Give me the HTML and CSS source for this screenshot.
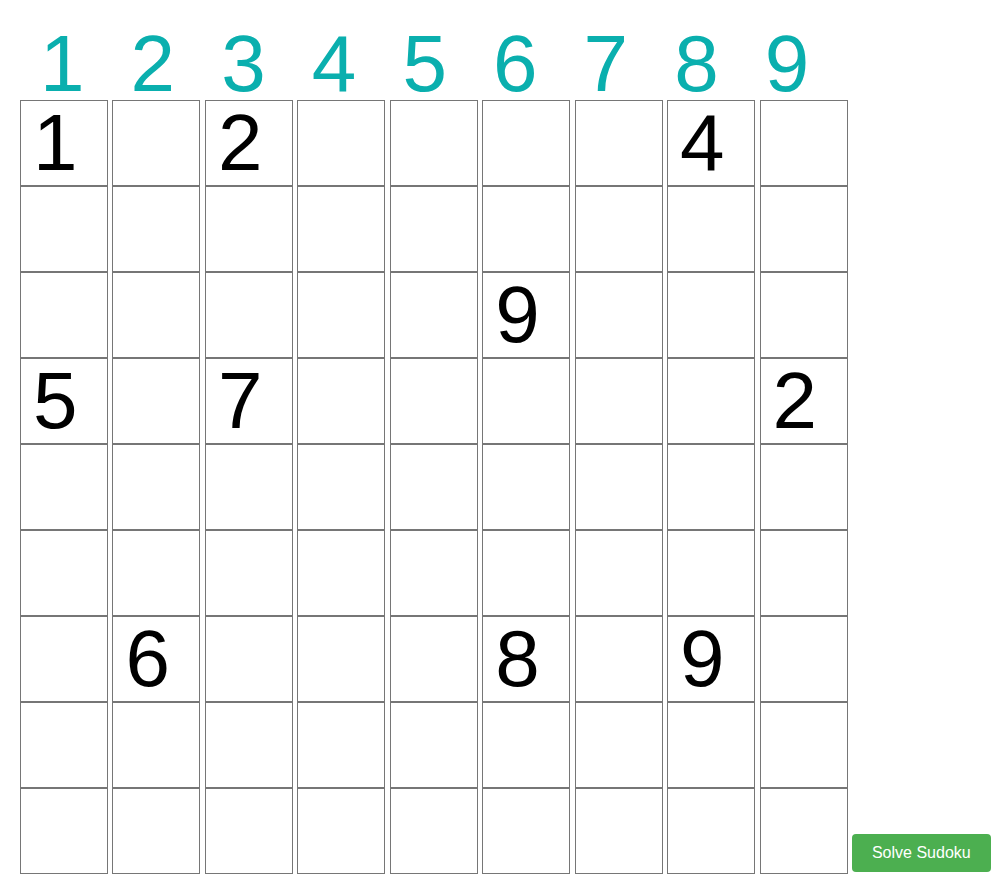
FILE: index.html
```html
<!DOCTYPE html>
<html>
<head>
<meta charset="utf-8">
<title>Sudoku</title>
<link rel="stylesheet" href="styles.css">
</head>
<body>
<div class="page">
  <div class="heads">
    <span class="head">1</span><span class="head">2</span><span class="head">3</span><span class="head">4</span><span class="head">5</span><span class="head">6</span><span class="head">7</span><span class="head">8</span><span class="head">9</span>
  </div>
  <div class="main">
    <div class="grid">
      <div class="cell">1</div><div class="cell"></div><div class="cell">2</div><div class="cell"></div><div class="cell"></div><div class="cell"></div><div class="cell"></div><div class="cell">4</div><div class="cell"></div>
      <div class="cell"></div><div class="cell"></div><div class="cell"></div><div class="cell"></div><div class="cell"></div><div class="cell"></div><div class="cell"></div><div class="cell"></div><div class="cell"></div>
      <div class="cell"></div><div class="cell"></div><div class="cell"></div><div class="cell"></div><div class="cell"></div><div class="cell">9</div><div class="cell"></div><div class="cell"></div><div class="cell"></div>
      <div class="cell">5</div><div class="cell"></div><div class="cell">7</div><div class="cell"></div><div class="cell"></div><div class="cell"></div><div class="cell"></div><div class="cell"></div><div class="cell">2</div>
      <div class="cell"></div><div class="cell"></div><div class="cell"></div><div class="cell"></div><div class="cell"></div><div class="cell"></div><div class="cell"></div><div class="cell"></div><div class="cell"></div>
      <div class="cell"></div><div class="cell"></div><div class="cell"></div><div class="cell"></div><div class="cell"></div><div class="cell"></div><div class="cell"></div><div class="cell"></div><div class="cell"></div>
      <div class="cell"></div><div class="cell">6</div><div class="cell"></div><div class="cell"></div><div class="cell"></div><div class="cell">8</div><div class="cell"></div><div class="cell">9</div><div class="cell"></div>
      <div class="cell"></div><div class="cell"></div><div class="cell"></div><div class="cell"></div><div class="cell"></div><div class="cell"></div><div class="cell"></div><div class="cell"></div><div class="cell"></div>
      <div class="cell"></div><div class="cell"></div><div class="cell"></div><div class="cell"></div><div class="cell"></div><div class="cell"></div><div class="cell"></div><div class="cell"></div><div class="cell"></div>
    </div>
    <button class="solve" type="button">Solve Sudoku</button>
  </div>
</div>
</body>
</html>
```
FILE: styles.css
```css
html, body {
  margin: 0;
  padding: 0;
  background: #ffffff;
}

body {
  font-family: "Liberation Sans", Arial, sans-serif;
}

.page {
  padding: 28px 0 0 20px;
}

.heads {
  display: flex;
  padding-left: 20px;
  height: 72px;
}

.head {
  width: 90.6px;
  flex: none;
  font-size: 80px;
  line-height: 72px;
  color: #0aafae;
}

.main {
  display: flex;
  align-items: flex-end;
  gap: 4.44px;
}

.grid {
  display: grid;
  grid-template-columns: repeat(9, 88px);
  grid-auto-rows: 86px;
  column-gap: 4.44px;
  row-gap: 0;
}

.cell {
  box-sizing: border-box;
  border: 1px solid #767676;
  padding-left: 12px;
  font-size: 80px;
  line-height: 83px;
  color: #000000;
}

.solve {
  margin-bottom: 2px;
  background: #4caf50;
  color: #ffffff;
  border: none;
  border-radius: 4px;
  padding: 10px 20px;
  font-family: "Liberation Sans", Arial, sans-serif;
  font-size: 16px;
  line-height: 18px;
  cursor: pointer;
}
```
